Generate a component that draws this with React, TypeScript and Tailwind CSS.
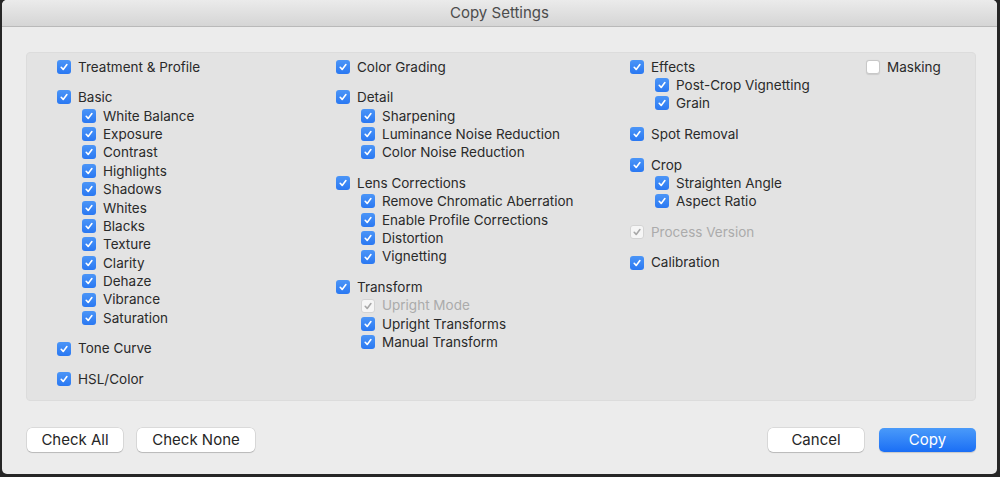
import React from "react";

type Item = { label: string; state?: "on" | "off" | "disabled"; children?: Item[] };

const columns: { width: string; groups: Item[] }[] = [
  {
    width: "w-[279px]",
    groups: [
      { label: "Treatment & Profile" },
      {
        label: "Basic",
        children: [
          "White Balance",
          "Exposure",
          "Contrast",
          "Highlights",
          "Shadows",
          "Whites",
          "Blacks",
          "Texture",
          "Clarity",
          "Dehaze",
          "Vibrance",
          "Saturation",
        ].map((label) => ({ label })),
      },
      { label: "Tone Curve" },
      { label: "HSL/Color" },
    ],
  },
  {
    width: "w-[294px]",
    groups: [
      { label: "Color Grading" },
      {
        label: "Detail",
        children: [{ label: "Sharpening" }, { label: "Luminance Noise Reduction" }, { label: "Color Noise Reduction" }],
      },
      {
        label: "Lens Corrections",
        children: [
          { label: "Remove Chromatic Aberration" },
          { label: "Enable Profile Corrections" },
          { label: "Distortion" },
          { label: "Vignetting" },
        ],
      },
      {
        label: "Transform",
        children: [
          { label: "Upright Mode", state: "disabled" },
          { label: "Upright Transforms" },
          { label: "Manual Transform" },
        ],
      },
    ],
  },
  {
    width: "w-[236px]",
    groups: [
      { label: "Effects", children: [{ label: "Post-Crop Vignetting" }, { label: "Grain" }] },
      { label: "Spot Removal" },
      { label: "Crop", children: [{ label: "Straighten Angle" }, { label: "Aspect Ratio" }] },
      { label: "Process Version", state: "disabled" },
      { label: "Calibration" },
    ],
  },
  {
    width: "w-[100px]",
    groups: [{ label: "Masking", state: "off" }],
  },
];

function Checkbox({ state = "on" }: { state?: "on" | "off" | "disabled" }) {
  if (state === "off") {
    return <span className="w-[14px] h-[14px] rounded-[3px] bg-white border border-[#c8c8c8] shadow-[0_0.5px_1px_rgba(0,0,0,0.1)] shrink-0" />;
  }
  const disabled = state === "disabled";
  return (
    <span
      className={
        disabled
          ? "w-[14px] h-[14px] rounded-[3px] bg-[#f6f6f6] border border-[#d4d4d4] shrink-0 flex items-center justify-center"
          : "w-[14px] h-[14px] rounded-[3px] bg-gradient-to-b from-[#4b95f7] to-[#2a78f2] shrink-0 flex items-center justify-center"
      }
    >
      <svg width="10" height="10" viewBox="0 0 10 10">
        <path
          d="M2.2 5.3 L4.2 7.4 L7.9 2.6"
          fill="none"
          stroke={disabled ? "#a8a8a8" : "#ffffff"}
          strokeWidth="1.6"
          strokeLinecap="round"
          strokeLinejoin="round"
        />
      </svg>
    </span>
  );
}

function Row({ item, nested }: { item: Item; nested?: boolean }) {
  const disabled = item.state === "disabled";
  return (
    <div className={`flex items-center h-[18.4px] gap-[7px] ${nested ? "pl-[25px]" : ""}`}>
      <Checkbox state={item.state} />
      <span className={disabled ? "text-[#ababab]" : "text-[#2a2a2a]"}>{item.label}</span>
    </div>
  );
}

export default function App() {
  return (
    <div
      className="w-[1000px] h-[477px] bg-[#262626] overflow-hidden"
      style={{ fontFamily: "Inter, 'Liberation Sans', sans-serif" }}
    >
      <div className="ml-[2px] w-[995px] h-[474px] bg-[#ececec] rounded-[5px] flex flex-col overflow-hidden">
        <div className="h-[27px] shrink-0 bg-gradient-to-b from-[#ebebeb] to-[#d5d5d5] border-b border-[#b9b9b9] flex items-center justify-center text-[15px] text-[#4c4c4c]">
          Copy Settings
        </div>
        <div className="flex-1 flex flex-col pl-[24px] pr-[21px] pt-[25px] pb-[22px]">
          <div className="h-[349px] bg-[#e3e3e3] rounded-[4px] border border-[#dcdcdc] flex pl-[30px] pt-[4.5px] text-[13.5px]">
            {columns.map((col, ci) => (
              <div key={ci} className={`${col.width} flex flex-col gap-[12.2px]`}>
                {col.groups.map((g) => (
                  <div key={g.label} className="flex flex-col">
                    <Row item={g} />
                    {g.children?.map((c) => (
                      <Row key={c.label} item={c} nested />
                    ))}
                  </div>
                ))}
              </div>
            ))}
          </div>
          <div className="flex mt-[27px] pl-[1px] text-[15px] text-[#262626]">
            <button className="w-[96px] h-[24px] bg-white rounded-[5px] shadow-[0_0_0_0.5px_rgba(0,0,0,0.15),0_1px_1px_rgba(0,0,0,0.15)] flex items-center justify-center">
              Check All
            </button>
            <button className="ml-[14px] w-[118px] h-[24px] bg-white rounded-[5px] shadow-[0_0_0_0.5px_rgba(0,0,0,0.15),0_1px_1px_rgba(0,0,0,0.15)] flex items-center justify-center">
              Check None
            </button>
            <div className="flex-1" />
            <button className="w-[96px] h-[24px] bg-white rounded-[5px] shadow-[0_0_0_0.5px_rgba(0,0,0,0.15),0_1px_1px_rgba(0,0,0,0.15)] flex items-center justify-center">
              Cancel
            </button>
            <button className="ml-[15px] w-[97px] h-[24px] rounded-[5px] bg-gradient-to-b from-[#4a9af9] to-[#1a6ef5] text-white shadow-[0_1px_1px_rgba(0,0,0,0.15)] flex items-center justify-center">
              Copy
            </button>
          </div>
        </div>
      </div>
    </div>
  );
}
